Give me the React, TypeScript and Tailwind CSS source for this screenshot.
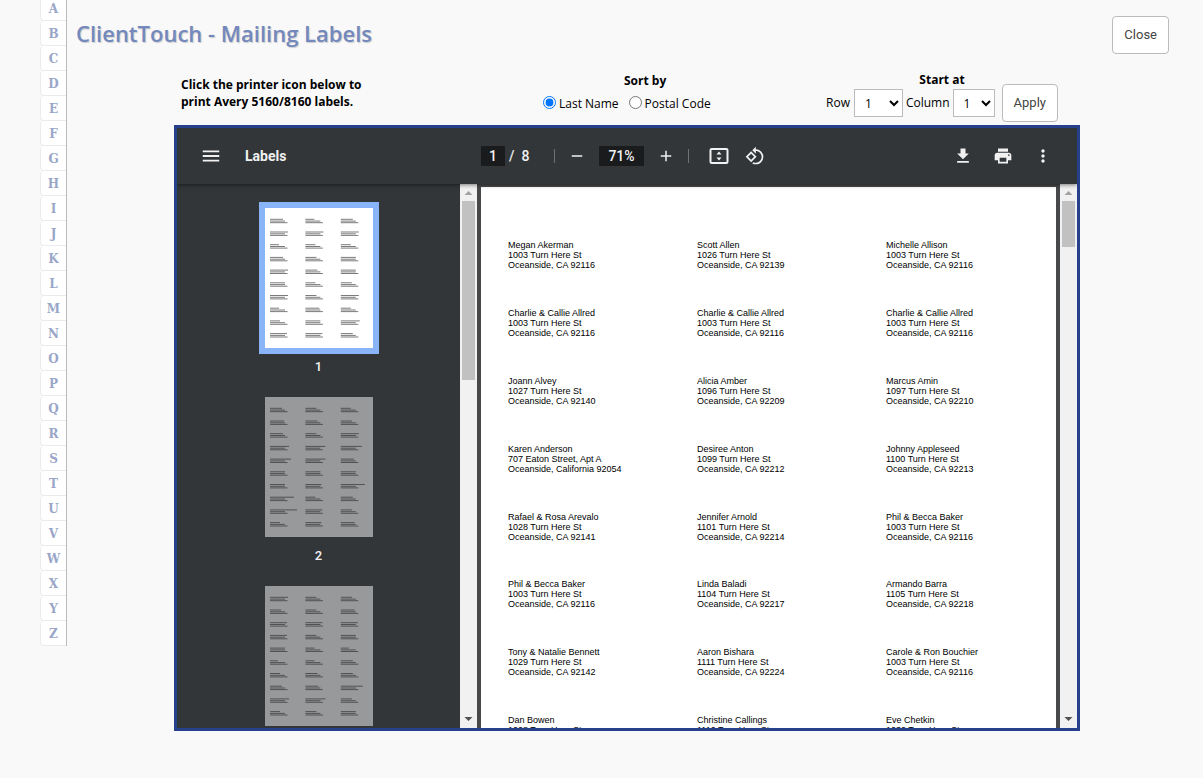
import { useState } from "react";
import { MdAdd, MdFileDownload, MdMenu, MdMoreVert, MdPrint, MdRemove, MdRotate90DegreesCcw } from "react-icons/md";

const LETTERS = "ABCDEFGHIJKLMNOPQRSTUVWXYZ".split("");

const LABELS: string[][] = [
  ["Megan Akerman", "1003 Turn Here St", "Oceanside, CA 92116"],
  ["Scott Allen", "1026 Turn Here St", "Oceanside, CA 92139"],
  ["Michelle Allison", "1003 Turn Here St", "Oceanside, CA 92116"],
  ["Charlie & Callie Allred", "1003 Turn Here St", "Oceanside, CA 92116"],
  ["Charlie & Callie Allred", "1003 Turn Here St", "Oceanside, CA 92116"],
  ["Charlie & Callie Allred", "1003 Turn Here St", "Oceanside, CA 92116"],
  ["Joann Alvey", "1027 Turn Here St", "Oceanside, CA 92140"],
  ["Alicia Amber", "1096 Turn Here St", "Oceanside, CA 92209"],
  ["Marcus Amin", "1097 Turn Here St", "Oceanside, CA 92210"],
  ["Karen Anderson", "707 Eaton Street, Apt A", "Oceanside, California 92054"],
  ["Desiree Anton", "1099 Turn Here St", "Oceanside, CA 92212"],
  ["Johnny Appleseed", "1100 Turn Here St", "Oceanside, CA 92213"],
  ["Rafael & Rosa Arevalo", "1028 Turn Here St", "Oceanside, CA 92141"],
  ["Jennifer Arnold", "1101 Turn Here St", "Oceanside, CA 92214"],
  ["Phil & Becca Baker", "1003 Turn Here St", "Oceanside, CA 92116"],
  ["Phil & Becca Baker", "1003 Turn Here St", "Oceanside, CA 92116"],
  ["Linda Baladi", "1104 Turn Here St", "Oceanside, CA 92217"],
  ["Armando Barra", "1105 Turn Here St", "Oceanside, CA 92218"],
  ["Tony & Natalie Bennett", "1029 Turn Here St", "Oceanside, CA 92142"],
  ["Aaron Bishara", "1111 Turn Here St", "Oceanside, CA 92224"],
  ["Carole & Ron Bouchier", "1003 Turn Here St", "Oceanside, CA 92116"],
  ["Dan Bowen", "1008 Turn Here St"],
  ["Christine Callings", "1110 Turn Here St"],
  ["Eve Chetkin", "1030 Turn Here St"],
];

// Width of the name line for each label on a thumbnail, row by row
const THUMBS = [
  {
    page: 1,
    names: [13, 9, 12, 18, 18, 18, 9, 10, 10, 13, 11, 15, 18, 12, 15, 15, 10, 11, 18, 11, 18, 9, 14, 10, 10, 15, 19, 17, 17, 12],
  },
  {
    page: 2,
    names: [12, 11, 10, 14, 12, 11, 13, 11, 18, 19, 20, 21, 21, 20, 13, 15, 15, 15, 15, 16, 24, 24, 10, 12, 27, 17, 11, 10, 16, 14],
  },
  {
    page: 3,
    names: [18, 11, 11, 11, 11, 14, 17, 17, 17, 17, 11, 15, 15, 9, 8, 8, 9, 12, 10, 12, 12, 12, 13, 22, 19, 20, 11, 10, 11, 15],
  },
];

function Scrollbar({ thumb }: { thumb: string }) {
  return (
    <div className="flex w-[17px] shrink-0 flex-col items-center bg-[#f1f1f1]">
      <svg viewBox="0 0 17 17" className="h-[17px] w-[17px] shrink-0">
        <path d="M4.5 11h8l-4-4z" fill="#a3a3a3" />
      </svg>
      <div className={`w-[13px] bg-[#c1c1c1] ${thumb}`} />
      <svg viewBox="0 0 17 17" className="mt-auto h-[17px] w-[17px] shrink-0">
        <path d="M4.5 6h8l-4 4z" fill="#505050" />
      </svg>
    </div>
  );
}

function PageThumb({ names }: { names: number[] }) {
  return (
    <svg viewBox="0 0 108 140" className="block h-[140px] w-[108px]" stroke="#222" strokeWidth="0.6">
      {names.map((w, i) => {
        const x = 5 + (i % 3) * 35.4;
        const y = 11.3 + Math.floor(i / 3) * 12.7;
        return (
          <g key={i}>
            <path d={`M${x} ${y}h${w}`} />
            <path d={`M${x} ${y + 1.8}h15`} />
            <path d={`M${x} ${y + 3.4}h17.5`} />
          </g>
        );
      })}
    </svg>
  );
}

function FitPageIcon() {
  return (
    <svg viewBox="0 0 24 24" className="h-6 w-6">
      <rect x="3.5" y="5" width="17" height="14" rx="1.2" fill="none" stroke="#f1f1f1" strokeWidth="2" />
      <path d="M12 7.5l2.5 3h-5zM12 16.5l2.5-3h-5z" fill="#f1f1f1" />
    </svg>
  );
}

const iconButton = "flex h-9 w-9 items-center justify-center";

function Toolbar() {
  return (
    <div className="relative z-10 flex h-14 shrink-0 items-center bg-[#323639] font-[Roboto,sans-serif] text-sm font-medium text-[#f1f1f1] shadow-[0_1px_4px_rgba(0,0,0,0.5)]">
      <div className="flex w-[304px] items-center pl-4">
        <button aria-label="Menu" className={iconButton}>
          <MdMenu size={22} />
        </button>
        <span className="ml-4 font-bold">Labels</span>
      </div>
      <div className="flex items-center">
        <input aria-label="Page" defaultValue="1" className="h-5 w-6 bg-[#191b1c] text-center" />
        <span className="ml-1 w-[22px] whitespace-pre">/  8</span>
        <span className="ml-[23px] h-[14px] w-px bg-[#6f7274]" />
        <button aria-label="Zoom out" className={`${iconButton} ml-1`}>
          <MdRemove size={18} />
        </button>
        <input aria-label="Zoom" defaultValue="71%" className="ml-1 h-5 w-[45px] bg-[#191b1c] text-center" />
        <button aria-label="Zoom in" className={`${iconButton} ml-1`}>
          <MdAdd size={18} />
        </button>
        <span className="ml-1 h-[14px] w-px bg-[#6f7274]" />
        <button aria-label="Fit to page" className={`${iconButton} ml-3`}>
          <FitPageIcon />
        </button>
        <button aria-label="Rotate" className={iconButton}>
          <MdRotate90DegreesCcw size={20} />
        </button>
      </div>
      <div className="ml-auto flex items-center gap-1 pr-4">
        <button aria-label="Download" className={iconButton}>
          <MdFileDownload size={20} />
        </button>
        <button aria-label="Print" className={iconButton}>
          <MdPrint size={20} />
        </button>
        <button aria-label="More" className={iconButton}>
          <MdMoreVert size={20} />
        </button>
      </div>
    </div>
  );
}

function Viewer() {
  return (
    <div className="flex h-[606px] flex-col overflow-hidden border-[3px] border-[#27408b] bg-[#323639]">
      <Toolbar />
      <div className="flex min-h-0 flex-1">
        <aside className="flex w-[300px] shrink-0">
          <div className="flex flex-1 flex-col items-center overflow-hidden pt-[18px]">
            {THUMBS.map(({ page, names }) => (
              <div key={page} className="flex h-[189px] shrink-0 flex-col items-center gap-1">
                <div className={page === 1 ? "border-[6px] border-[#8ab4f8]" : "border-[6px] border-transparent"}>
                  <div className={page === 1 ? "bg-white" : "bg-[#98999b]"}>
                    <PageThumb names={names} />
                  </div>
                </div>
                {page < 3 && (
                  <span className="font-[Roboto,sans-serif] text-[13px] leading-[18px] font-medium text-[#f1f1f1]">
                    {page}
                  </span>
                )}
              </div>
            ))}
          </div>
          <Scrollbar thumb="h-[179px]" />
        </aside>
        <div className="flex min-w-0 flex-1 bg-[#46484a]">
          <div className="mx-1 mt-[3px] min-w-0 flex-1 overflow-hidden bg-white pt-[53px] pl-[27px]">
            <div className="grid h-[543px] grid-cols-[189px_189px_1fr] grid-rows-8 font-['Liberation_Sans',Arial,sans-serif] text-[9px] leading-[10px] text-black">
              {LABELS.map((lines, i) => (
                <address key={i} className="whitespace-nowrap not-italic">
                  {lines.map((line) => (
                    <div key={line}>{line}</div>
                  ))}
                </address>
              ))}
            </div>
          </div>
          <Scrollbar thumb="h-[46px]" />
        </div>
      </div>
    </div>
  );
}

const outlineButton =
  "h-[38px] rounded border border-[#bbb] bg-white px-[11px] font-[Roboto,sans-serif] text-[13px] text-[#444]";

export default function App() {
  const [sortBy, setSortBy] = useState("name");

  return (
    <div className="flex min-h-screen items-start bg-[#f9f9f9] font-['Open_Sans',sans-serif] text-[12px] text-black">
      <nav className="-mt-1 ml-10 w-[27px] shrink-0 border-r border-[#bbb]">
        {LETTERS.map((letter) => (
          <a
            key={letter}
            href={`#${letter}`}
            className="flex h-[25px] items-center justify-center rounded-l border-b border-l border-[#ebebeb] bg-white pt-[2px] font-['DejaVu_Serif','Courier_New',serif] text-[12px] font-bold text-[#99a6c8]"
          >
            {letter}
          </a>
        ))}
      </nav>

      <main className="min-w-0 flex-1">
        <header className="flex items-start justify-between pt-4 pr-[34px] pl-[9px]">
          <h1 className="text-[22px] leading-[34px] font-semibold text-[#7388bd] [text-shadow:1px_1px_1px_#ccc]">
            ClientTouch - Mailing Labels
          </h1>
          <button className={outlineButton}>Close</button>
        </header>

        <div className="mr-[123px] ml-[107px]">
          <div className="flex h-[71px] items-start">
            <p className="w-[369px] pt-[22px] pl-[7px] leading-[17px] font-bold">
              Click the printer icon below to
              <br />
              print Avery 5160/8160 labels.
            </p>
            <fieldset className="pt-[18px]">
              <legend className="contents">
                <span className="block pl-[81px] leading-[18px] font-bold">Sort by</span>
              </legend>
              <div className="flex gap-[10px] leading-[28px]">
                <label className="flex items-center gap-[3px]">
                  <input
                    type="radio"
                    name="sort"
                    className="mb-1 h-[13px] w-[13px]"
                    checked={sortBy === "name"}
                    onChange={() => setSortBy("name")}
                  />
                  Last Name
                </label>
                <label className="flex items-center gap-[3px]">
                  <input
                    type="radio"
                    name="sort"
                    className="mb-1 h-[13px] w-[13px]"
                    checked={sortBy === "postal"}
                    onChange={() => setSortBy("postal")}
                  />
                  Postal Code
                </label>
              </div>
            </fieldset>
            <div className="mr-[22px] ml-auto pt-[17px]">
              <div className="text-center leading-[18px] font-bold">Start at</div>
              <div className="-mt-[5px] flex items-center">
                <label htmlFor="row" className="mr-1">
                  Row
                </label>
                <select id="row" className="mr-[3px] h-7 w-[49px] border border-[#bbb] bg-white pl-[6px]">
                  <option>1</option>
                  <option>2</option>
                  <option>3</option>
                </select>
                <label htmlFor="column" className="mr-[3px]">
                  Column
                </label>
                <select id="column" className="mr-[7px] h-7 w-[42px] border border-[#bbb] bg-white pl-[6px]">
                  <option>1</option>
                  <option>2</option>
                  <option>3</option>
                </select>
                <button className={outlineButton}>Apply</button>
              </div>
            </div>
          </div>
          <Viewer />
        </div>
      </main>
    </div>
  );
}
